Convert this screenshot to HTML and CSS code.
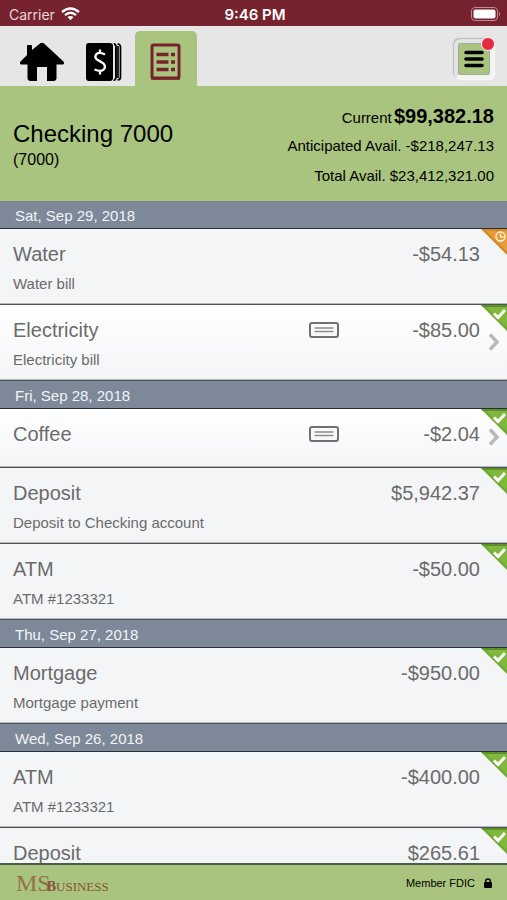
FILE: index.html
```
<!DOCTYPE html>
<html lang="en">
<head>
    <meta charset="UTF-8">
    <meta name="viewport" content="width=device-width, initial-scale=1.0">
    <title>MS Business - Checking 7000</title>
    <link rel="stylesheet" href="styles.css">
</head>
<body>
    <svg class="symbols" aria-hidden="true">
        <symbol id="cleared" viewBox="0 0 26 26">
            <path d="M0 0H26V26Z" fill="#6fa82e"/>
            <path d="M5 2H26V23Z" fill="#7fb93c"/>
            <path d="M0 0H26V2H2Z" fill="#5d8f2b"/>
            <path d="M13 8.500L17 12.500L24 5" fill="none" stroke="#fff" stroke-width="3"/>
        </symbol>
        <symbol id="pending" viewBox="0 0 26 26">
            <path d="M0 0H26V26Z" fill="#d4882c"/>
            <path d="M5 2H26V23Z" fill="#e79c3b"/>
            <circle cx="19.500" cy="7.500" r="4.500" fill="none" stroke="#fff3df" stroke-width="1.400"/>
            <path d="M19.500 4.500V7.800H22.500" fill="none" stroke="#fff3df" stroke-width="1.200"/>
        </symbol>
        <symbol id="check" viewBox="0 0 30 16">
            <rect x="1" y="1" width="28" height="14" rx="2" fill="#fafafa" stroke="#707070" stroke-width="2"/>
            <path d="M5.500 6H24.500M5.500 9.500H24.500" stroke="#8c8c8c" stroke-width="1.300"/>
        </symbol>
        <symbol id="chevron" viewBox="0 0 12 18">
            <path d="M2 1.500L9 9L2 16.500" fill="none" stroke="#b9b9b9" stroke-width="3.500"/>
        </symbol>
    </svg>

    <div class="status-bar">
        <span class="carrier">Carrier
            <svg width="19" height="14" viewBox="0 0 19 14" fill="none" stroke="#fff" stroke-width="2.400">
                <path d="M1 5Q9.500 -2.200 18 5M4 8.200Q9.500 3.500 15 8.200"/>
                <path d="M6.500 10Q9.500 7.800 12.500 10L9.500 13.200Z" fill="#fff" stroke="none"/>
            </svg>
        </span>
        <span class="time">9:46 PM</span>
        <span class="battery">
            <svg width="30" height="14" viewBox="0 0 30 14">
                <rect x="0.500" y="0.500" width="26" height="13" rx="3.500" fill="none" stroke="#bd8b93"/>
                <rect x="2.500" y="2.500" width="22" height="9" rx="2" fill="#fff"/>
                <path d="M28 4.500Q30 7 28 9.500Z" fill="#bd8b93"/>
            </svg>
        </span>
    </div>

    <nav class="tabs">
        <button class="tab" aria-label="Home">
            <svg width="46" height="40" viewBox="0 0 46 40">
                <path d="M8 4Q8 3 9 3H12Q13 3 13 4V8L21 1.500Q23 0 25 1.500L44.500 19.500Q46 22 43.500 22.500H37.500V36Q37.500 39 34.500 39H28V25H18V39H12Q8.500 39 8.500 36V22.500H2.500Q0 22 1.500 19.500L8 13Z"/>
            </svg>
        </button>
        <button class="tab" aria-label="Accounts">
            <svg width="36" height="40" viewBox="0 0 36 40">
                <rect x="0" y="1" width="27" height="38" rx="3"/>
                <path d="M27 1H28.500Q30.500 2 30.500 4V36Q30.500 38 28.500 39H27Q29 37 29 36V4Q29 2 27 1Z"/>
                <path d="M28.500 2Q30 3 30 5V35Q30 37 28.500 38M31.500 2Q34.500 2 34.500 5V35Q34.500 38 31.500 38M32 4V36" fill="none" stroke="#000" stroke-width="1.700"/>
                <path d="M19 12.500Q13.500 9.500 10.500 12Q8 15 11 17.500L16 20.500Q20 23 18.500 26.500Q16 30.500 8.500 27.500M14 7.500V11M14 29V32.500" fill="none" stroke="#fff" stroke-width="2.300"/>
            </svg>
        </button>
        <button class="tab active" aria-label="Transactions">
            <svg width="32" height="38" viewBox="0 0 32 38">
                <rect x="2" y="2" width="27" height="33" rx="1.500" fill="none" stroke="#76222c" stroke-width="3"/>
                <path d="M1 35.500H30" stroke="#76222c" stroke-width="2.500"/>
                <path d="M6.500 11.500H18.500M21 11.500H25M6.500 19H18.500M21 19H25M6.500 26.500H18.500M21 26.500H25" stroke="#76222c" stroke-width="3.600"/>
            </svg>
        </button>
        <button class="menu" aria-label="Menu, new messages">
            <svg width="20" height="18" viewBox="0 0 20 18" stroke="#000" stroke-width="3.600" stroke-linecap="round">
                <path d="M2 2.500H18M2 9H18M2 15.500H18"/>
            </svg>
            <span class="dot"></span>
        </button>
    </nav>

    <header class="account">
        <div>
            <h1>Checking 7000</h1>
            <p class="number">(7000)</p>
        </div>
        <div class="balances">
            <p>Current <strong>$99,382.18</strong></p>
            <p>Anticipated Avail. -$218,247.13</p>
            <p>Total Avail. $23,412,321.00</p>
        </div>
    </header>

    <main class="transactions">
        <h2>Sat, Sep 29, 2018</h2>
        <div class="row">
            <div class="line"><span class="name">Water</span><span class="amount">-$54.13</span></div>
            <p class="memo">Water bill</p>
            <svg class="corner" aria-label="Pending"><use href="#pending"/></svg>
        </div>
        <a class="row link" href="#electricity">
            <div class="line"><span class="name">Electricity</span><svg class="check"><use href="#check"/></svg><span class="amount">-$85.00</span></div>
            <p class="memo">Electricity bill</p>
            <svg class="corner" aria-label="Cleared"><use href="#cleared"/></svg>
            <svg class="chevron"><use href="#chevron"/></svg>
        </a>

        <h2>Fri, Sep 28, 2018</h2>
        <a class="row link short" href="#coffee">
            <div class="line"><span class="name">Coffee</span><svg class="check"><use href="#check"/></svg><span class="amount">-$2.04</span></div>
            <svg class="corner" aria-label="Cleared"><use href="#cleared"/></svg>
            <svg class="chevron"><use href="#chevron"/></svg>
        </a>
        <div class="row">
            <div class="line"><span class="name">Deposit</span><span class="amount">$5,942.37</span></div>
            <p class="memo">Deposit to Checking account</p>
            <svg class="corner" aria-label="Cleared"><use href="#cleared"/></svg>
        </div>
        <div class="row">
            <div class="line"><span class="name">ATM</span><span class="amount">-$50.00</span></div>
            <p class="memo">ATM #1233321</p>
            <svg class="corner" aria-label="Cleared"><use href="#cleared"/></svg>
        </div>

        <h2>Thu, Sep 27, 2018</h2>
        <div class="row">
            <div class="line"><span class="name">Mortgage</span><span class="amount">-$950.00</span></div>
            <p class="memo">Mortgage payment</p>
            <svg class="corner" aria-label="Cleared"><use href="#cleared"/></svg>
        </div>

        <h2>Wed, Sep 26, 2018</h2>
        <div class="row">
            <div class="line"><span class="name">ATM</span><span class="amount">-$400.00</span></div>
            <p class="memo">ATM #1233321</p>
            <svg class="corner" aria-label="Cleared"><use href="#cleared"/></svg>
        </div>
        <div class="row">
            <div class="line"><span class="name">Deposit</span><span class="amount">$265.61</span></div>
            <svg class="corner" aria-label="Cleared"><use href="#cleared"/></svg>
        </div>
    </main>

    <footer>
        <div class="logo"><span class="ms">MS</span><span class="business"><span class="cap">B</span>USINESS</span></div>
        <div class="fdic">Member FDIC
            <svg width="8" height="10" viewBox="0 0 8 10">
                <rect x="0" y="4" width="8" height="6" rx="1"/>
                <path d="M1.800 5V3Q1.800 1 4 1T6.200 3V5" fill="none" stroke="#000" stroke-width="1.500"/>
            </svg>
        </div>
    </footer>
</body>
</html>
```
FILE: styles.css
```
* { box-sizing: border-box; }
body { display: flex; flex-direction: column; height: 100vh; margin: 0; overflow: hidden; background: #f4f5f7; color: #000; font-family: "Liberation Sans", Arial, sans-serif; font-size: 15px; }
h1, h2, p { margin: 0; font-weight: normal; }
button { border: 0; padding: 0; background: none; cursor: pointer; }
svg { display: block; }
.symbols { position: absolute; width: 0; height: 0; }

.status-bar { display: flex; align-items: center; flex: none; height: 26px; padding: 2px 6px 0 9px; background: #76222f; color: #fff; font-family: Inter, sans-serif; font-size: 14px; }
.carrier, .battery { display: flex; flex: 1; align-items: center; gap: 6px; color: #ead5d8; }
.battery { justify-content: flex-end; }
.time { font-size: 15px; font-weight: 600; }

.tabs { display: flex; flex: none; align-items: flex-end; height: 60px; padding: 0 13px 0 11px; background: #e6e6e6; }
.tab { display: flex; align-items: center; justify-content: center; width: 62px; height: 55px; padding-top: 6px; border-radius: 5px 5px 0 0; }
.tab.active { background: #a9c47f; }
.tab svg { flex: none; }
.menu { position: relative; display: flex; align-items: center; justify-content: center; width: 40px; height: 40px; margin: 0 0 7px auto; background: #a9c47f; border: 4px solid #f3f3f3; border-top-color: #e3e3e3; border-left-color: #e3e3e3; border-radius: 6px; box-shadow: -1px -1px 1px #b8b8b8, 1px 1px 1px #f8f8f8, inset 0 0 1px 1px #a3a99a; }
.dot { position: absolute; top: -6px; right: -5px; width: 14px; height: 14px; background: #e62b40; border: 1px solid #f3f3f3; border-radius: 50%; }

.account { display: flex; flex: none; justify-content: space-between; padding: 15px 13px 10px; background: #a9c47f; }
.account h1 { padding-top: 19px; font-size: 24px; line-height: 28px; }
.number { font-size: 16px; line-height: 24px; }
.balances { text-align: right; line-height: 30px; }
.balances p { height: 30px; }
.balances strong { margin-left: -2px; font-size: 20px; }

.transactions { flex: 1; min-height: 0; overflow-y: auto; scrollbar-width: none; }
.transactions h2 { height: 28px; padding-left: 15px; background: #7d8999; border-bottom: 1px solid #292d35; color: #f2f4f7; font-size: 15px; line-height: 29px; }
.row { position: relative; display: block; min-height: 76px; padding: 12px 27px 0 13px; background: #f4f5f7; border-bottom: 1px solid #505357; box-shadow: inset 0 -1px #b4b6b8; color: #6b6b6b; text-decoration: none; }
.row.link { background: linear-gradient(#fff, #f4f5f7); }
.row.short { min-height: 59px; }
.line { display: flex; align-items: center; font-size: 20px; line-height: 26px; }
.name { flex: 1; }
.amount { width: 141px; text-align: right; }
.check { width: 30px; height: 16px; }
.memo { padding-top: 7px; font-size: 15px; line-height: 20px; }
.corner { position: absolute; top: 0; right: 0; width: 26px; height: 26px; }
.chevron { position: absolute; top: 28px; right: 7px; width: 12px; height: 18px; }
.short .chevron { top: 19px; }

footer { display: flex; flex: none; align-items: center; justify-content: space-between; height: 37px; padding: 0 15px 0 16px; background: #a9c47f; border-top: 2px solid #4c5b4b; }
.logo { display: flex; align-items: baseline; color: #8a5138; font-family: "Liberation Serif", "Times New Roman", serif; font-size: 13px; }
.ms { color: #95704e; font-size: 24px; line-height: 30px; }
.business { margin-left: -4px; }
.cap { font-size: 14px; font-weight: bold; }
.fdic { display: flex; align-items: center; gap: 9px; font-size: 11px; }
```
